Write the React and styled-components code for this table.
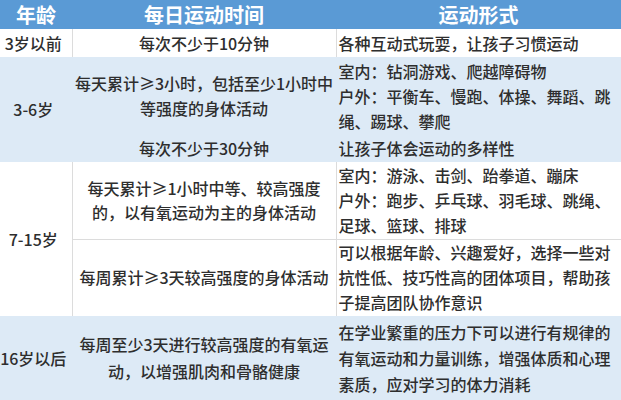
import React from 'react';
import styled, { createGlobalStyle } from 'styled-components';

const GlobalStyle = createGlobalStyle`
  html, body {
    margin: 0;
    padding: 0;
    background: #fff;
  }
  body {
    font-family: "Noto Sans CJK SC", "Noto Sans", sans-serif;
  }
`;

const Table = styled.table`
  width: 621px;
  border-collapse: collapse;
  border-spacing: 0;
  table-layout: fixed;
  font-size: 16px;
  font-weight: 500;
  color: #2e2e2e;
`;

const HeadRow = styled.tr`
  height: 29px;
  background: #5a9ad5;
`;

const HeadCell = styled.th`
  padding: 0;
  font-size: 20px;
  font-weight: 700;
  line-height: 29px;
  color: #fff;
  text-align: center;
  vertical-align: middle;
`;

const Row = styled.tr`
  height: ${props => props.$height}px;
  background: ${props => (props.$tone === 'blue' ? '#ddeaf6' : '#fff')};
`;

const AgeCell = styled.td`
  padding: 0 5px 0 0;
  text-align: center;
  vertical-align: middle;
  white-space: nowrap;
  line-height: 25px;
`;

const Cell = styled.td`
  padding: 0 2px;
  vertical-align: middle;
  white-space: nowrap;
  text-align: ${props => (props.$center ? 'center' : 'left')};
  line-height: ${props => props.$lh || 25}px;
  border-left: 1px solid ${props => (props.$lined ? '#dcdcdc' : 'transparent')};
  border-right: ${props => (props.$lined && props.$edge ? '1px solid #dcdcdc' : 'none')};
  border-top: ${props => (props.$divider ? '1px solid #dcdcdc' : 'none')};
`;

function Lines({ items }) {
  return items.map((line, i) => (
    <React.Fragment key={i}>
      {i > 0 && <br />}
      {line}
    </React.Fragment>
  ));
}

export default function App() {
  return (
    <>
      <GlobalStyle />
      <Table>
        <colgroup>
          <col style={{ width: 72 }} />
          <col style={{ width: 264 }} />
          <col style={{ width: 285 }} />
        </colgroup>
        <thead>
          <HeadRow>
            <HeadCell>年龄</HeadCell>
            <HeadCell>每日运动时间</HeadCell>
            <HeadCell>运动形式</HeadCell>
          </HeadRow>
        </thead>
        <tbody>
          <Row $height={28}>
            <AgeCell>3岁以前</AgeCell>
            <Cell $center $lined>每次不少于10分钟</Cell>
            <Cell $lined $edge>各种互动式玩耍，让孩子习惯运动</Cell>
          </Row>

          <Row $tone="blue" $height={78}>
            <AgeCell rowSpan={2}>3-6岁</AgeCell>
            <Cell $center>
              <Lines items={['每天累计≥3小时，包括至少1小时中', '等强度的身体活动']} />
            </Cell>
            <Cell>
              <Lines items={['室内：钻洞游戏、爬越障碍物', '户外：平衡车、慢跑、体操、舞蹈、跳', '绳、踢球、攀爬']} />
            </Cell>
          </Row>
          <Row $tone="blue" $height={27}>
            <Cell $center>每次不少于30分钟</Cell>
            <Cell>让孩子体会运动的多样性</Cell>
          </Row>

          <Row $height={77}>
            <AgeCell rowSpan={2}>7-15岁</AgeCell>
            <Cell $center $lined $lh={24}>
              <Lines items={['每天累计≥1小时中等、较高强度', '的，以有氧运动为主的身体活动']} />
            </Cell>
            <Cell $lined $edge>
              <Lines items={['室内：游泳、击剑、跆拳道、蹦床', '户外：跑步、乒乓球、羽毛球、跳绳、', '足球、篮球、排球']} />
            </Cell>
          </Row>
          <Row $height={77}>
            <Cell $center $lined $divider>每周累计≥3天较高强度的身体活动</Cell>
            <Cell $lined $edge $divider>
              <Lines items={['可以根据年龄、兴趣爱好，选择一些对', '抗性低、技巧性高的团体项目，帮助孩', '子提高团队协作意识']} />
            </Cell>
          </Row>

          <Row $tone="blue" $height={84}>
            <AgeCell>16岁以后</AgeCell>
            <Cell $center $lh={27}>
              <Lines items={['每周至少3天进行较高强度的有氧运', '动，以增强肌肉和骨骼健康']} />
            </Cell>
            <Cell $lh={26}>
              <Lines items={['在学业繁重的压力下可以进行有规律的', '有氧运动和力量训练，增强体质和心理', '素质，应对学习的体力消耗']} />
            </Cell>
          </Row>
        </tbody>
      </Table>
    </>
  );
}
